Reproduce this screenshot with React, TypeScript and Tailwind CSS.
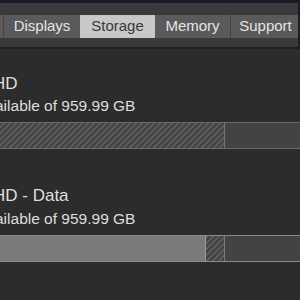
const tabs = [
  { label: "Overview", w: "w-[78px]" },
  { label: "Displays", w: "w-[77px]" },
  { label: "Storage", w: "w-[75px]", active: true },
  { label: "Memory", w: "w-[75px]" },
  { label: "Support", w: "w-[70px]" },
];

const hatch =
  "bg-[repeating-linear-gradient(135deg,#616161_0px,#616161_1.5px,#454545_1.5px,#454545_4.25px)]";

function Label({ prefix, text, className }: { prefix: string; text: string; className: string }) {
  // prefix is clipped off the left edge of the window
  return (
    <div className={`flex whitespace-nowrap ${className}`}>
      <span className="flex w-0 justify-end">{prefix}</span>
      <span>{text}</span>
    </div>
  );
}

export default function App() {
  return (
    <div
      className="w-[300px] h-[300px] overflow-hidden bg-[#2c2c2c] flex flex-col"
      style={{ fontFamily: '"Liberation Sans", Arial, sans-serif' }}
    >
      <div className="h-[3px] bg-[#161b28] shrink-0" />

      {/* toolbar with segmented tabs */}
      <div className="flex h-[46px] shrink-0 bg-[#3a3a3a] border-b-2 border-[#1e1e1e]">
        <div className="flex-1 overflow-hidden pt-[12px]">
          <div className="flex h-[23px] -ml-[75px]">
            {tabs.map((t, i) => (
              <div
                key={t.label}
                className={`${t.w} shrink-0 flex items-center justify-center text-[15px] ${
                  t.active ? "bg-[#c8c8c8] text-[#3a3a3a]" : "bg-[#5a5a5a] text-[#e4e4e4]"
                } ${i > 0 && !t.active && !tabs[i - 1].active ? "border-l border-[#454545]" : ""}`}
              >
                {t.label}
              </div>
            ))}
          </div>
        </div>
        <div className="w-[2px] bg-[#1a1d26]" />
      </div>

      {/* volumes */}
      <div className="flex flex-col text-[#dedede] pt-[24px]">
        <Label prefix="Macintosh " text="HD" className="-ml-[7px] text-[17px] leading-[21px]" />
        <Label
          prefix="733.41 GB av"
          text="ailable of 959.99 GB"
          className="-ml-[5px] mt-[2px] text-[15.5px] leading-[19px]"
        />
        <div className="mt-[7px] h-[27px] flex -mx-[4px] border border-[#6a6a6a] bg-[#434343]">
          <div className={`w-[228px] h-full border-r border-[#747474] ${hatch}`} />
        </div>

        <Label prefix="Macintosh " text="HD - Data" className="-ml-[7px] mt-[36px] text-[17px] leading-[21px]" />
        <Label
          prefix="733.41 GB av"
          text="ailable of 959.99 GB"
          className="-ml-[5px] mt-[3px] text-[15.5px] leading-[19px]"
        />
        <div className="mt-[7px] h-[27px] flex -mx-[4px] border border-[#8a8a8a] bg-[#434343]">
          <div className="w-[209px] h-full bg-[#7a7a7a] border-r border-[#9a9a9a]" />
          <div className={`w-[19px] h-full border-r border-[#7a7a7a] ${hatch}`} />
        </div>
      </div>
    </div>
  );
}
